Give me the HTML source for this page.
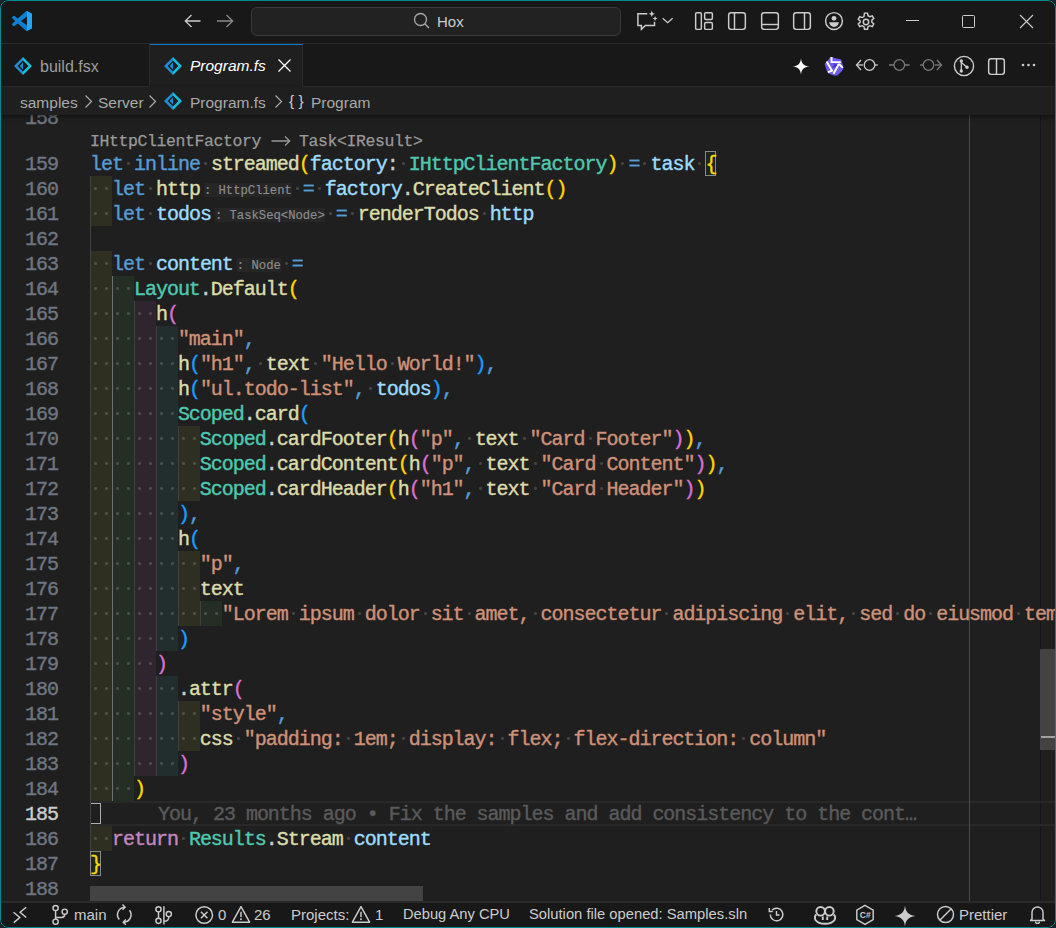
<!DOCTYPE html><html><head><meta charset="utf-8"><style>
*{margin:0;padding:0;box-sizing:border-box}
html,body{width:1056px;height:928px;overflow:hidden;background:#1e232b}
#win{position:absolute;left:0;top:0;width:1056px;height:928px;border-radius:8px;background:#181818;overflow:hidden}
#frame{position:absolute;left:0;top:0;width:1056px;height:928px;border:1px solid #008b93;border-radius:8px;z-index:50}
.abs{position:absolute}
#title{position:absolute;left:0;top:0;width:1056px;height:44px;background:#181818;border-bottom:1px solid #2b2b2b}
#tabs{position:absolute;left:0;top:44px;width:1056px;height:44px;background:#181818}
#crumbs{position:absolute;left:0;top:87px;width:1056px;height:28px;background:#1f1f1f;box-shadow:0 2px 4px rgba(0,0,0,0.45);z-index:5}
#editor{position:absolute;left:0;top:88px;width:1056px;height:813px;background:#1f1f1f;overflow:hidden}
#status{position:absolute;left:0;top:901px;width:1056px;height:27px;background:#181818;border-top:2px solid #2a2a2a}
.ui{font-family:"Liberation Sans",sans-serif;color:#cccccc;white-space:pre}
.ln{position:absolute;left:90px;height:25px;line-height:25px;font-family:"Liberation Mono",monospace;font-size:20px;letter-spacing:-1.0158px;white-space:pre;padding-top:1px;-webkit-text-stroke:0.4px currentColor}
.num{position:absolute;left:0;width:58px;text-align:right;height:25px;line-height:25px;font-family:"Liberation Mono",monospace;font-size:20px;letter-spacing:-1.0158px;color:#6e7681;padding-top:1px;-webkit-text-stroke:0.4px currentColor}
.num.act{color:#cccccc}
.ib{position:absolute;height:25px}
.g{position:absolute;width:1px}
.w{color:transparent;-webkit-text-stroke:0;background:radial-gradient(circle at 50% calc(50% - 1px), rgba(210,210,210,0.2) 1.2px, transparent 1.8px)}
.k{color:#569cd6}.f{color:#dcdcaa}.v{color:#9cdcfe}.t{color:#4ec9b0}.s{color:#ce9178}.p{color:#cccccc}.c{color:#569cd6}.b1{color:#ffd700}.b2{color:#da70d6}.b3{color:#179fff}.r{color:#c586c0}.o{color:#569cd6}
.hint{display:inline-block;margin-left:4px;font-size:12.22px;letter-spacing:-0.007px;line-height:13px;height:14px;vertical-align:1px;background:#262626;color:#8b8b8b;-webkit-text-stroke:0.2px #8b8b8b;padding-top:2px}
.bm{color:#ffd700}
</style></head><body>
<div id="win">
<div id="title"></div>
<div id="tabs"></div>
<svg class="abs" style="left:12px;top:11px" width="20" height="20" viewBox="0 0 100 100" ><path fill="#0a7fd4" d="M96.46 10.78L75.87.87a6.22 6.22 0 0 0-7.1 1.21L29.36 38.04 12.19 25.01a4.16 4.16 0 0 0-5.32.24L1.36 30.25a4.17 4.17 0 0 0 0 6.17L16.25 50 1.36 63.58a4.17 4.17 0 0 0 0 6.17l5.51 5a4.16 4.16 0 0 0 5.32.24l17.17-13.03 39.41 35.96a6.22 6.22 0 0 0 7.1 1.21l20.59-9.91A6.24 6.24 0 0 0 100 83.59V16.41a6.24 6.24 0 0 0-3.54-5.63zM75.02 72.7L45.11 50l29.91-22.7z"/><path fill="#007acc" d="M1.36 30.25a4.17 4.17 0 0 0 0 6.17L16.25 50l-14.89 13.58a4.17 4.17 0 0 0 0 6.17l5.51 5a4.16 4.16 0 0 0 5.32.24L75.02 27.3V2.08a6.22 6.22 0 0 0-6.25.0L12.19 25.01a4.16 4.16 0 0 0-5.32.24z" opacity="0"/><path fill="#25a5f5" d="M70.91 99.32a6.22 6.22 0 0 0 4.96-.19l20.59-9.91A6.24 6.24 0 0 0 100 83.59V16.41a6.24 6.24 0 0 0-3.54-5.63L75.87.87a6.22 6.22 0 0 0-4.96-.19c.78.3 1.5.76 2.11 1.37L75.02 2.1v95.8l-2 .05c-.6.6-1.33 1.07-2.11 1.37z"/></svg>
<svg class="abs" style="left:183px;top:13px" width="19" height="16" viewBox="0 0 19 16" ><path d="M2 8H17.5M8.5 2L2.3 8l6.2 6" fill="none" stroke="#cccccc" stroke-width="1.3"/></svg>
<svg class="abs" style="left:216px;top:13px" width="19" height="16" viewBox="0 0 19 16" ><path d="M1 8H16.5M10.5 2L16.7 8l-6.2 6" fill="none" stroke="#8b8b8b" stroke-width="1.3"/></svg>
<div class="abs" style="left:251px;top:7px;width:370px;height:29px;border:1px solid #3a3a3a;border-radius:6px;background:#222222"></div>
<svg class="abs" style="left:413px;top:12px" width="17" height="17" viewBox="0 0 17 17" ><circle cx="7.5" cy="7.5" r="6" fill="none" stroke="#a8a8a8" stroke-width="1.3"/><path d="M11.8 11.8L16 16" stroke="#a8a8a8" stroke-width="1.4"/></svg>
<div class="ui abs" style="left:437px;top:14px;font-size:15px;line-height:15px;color:#cccccc;">Hox</div>
<svg class="abs" style="left:630px;top:5px" width="50" height="32" viewBox="0 0 50 32" ><path d="M17.3 8.8H7.9V20.4H11.4V24.2L15.4 20.4H24.5V16.8" fill="none" stroke="#cccccc" stroke-width="1.45"/><path d="M21.8 5.6l.9 2.3 2.3.9-2.3.9-.9 2.3-.9-2.3-2.3-.9 2.3-.9z" fill="#cccccc"/><path d="M25.1 10.9l.7 1.9 1.9.7-1.9.7-.7 1.9-.7-1.9-1.9-.7 1.9-.7z" fill="#cccccc"/><path d="M32.7 13.3l4.95 4.4 4.95-4.4" fill="none" stroke="#cccccc" stroke-width="1.3"/></svg>
<svg class="abs" style="left:694px;top:11px" width="20" height="20" viewBox="0 0 20 20" ><rect x="1.65" y="1.65" width="5.7" height="16.7" rx="1.2" fill="none" stroke="#cccccc" stroke-width="1.45"/><rect x="10.65" y="1.65" width="7.7" height="6.9" rx="1.2" fill="none" stroke="#cccccc" stroke-width="1.45"/><rect x="10.65" y="11.45" width="7.7" height="6.9" rx="1.2" fill="none" stroke="#cccccc" stroke-width="1.45"/></svg>
<svg class="abs" style="left:727px;top:11px" width="20" height="20" viewBox="0 0 20 20" ><rect x="1.65" y="1.65" width="16.7" height="16.7" rx="2.5" fill="none" stroke="#cccccc" stroke-width="1.45"/><path d="M7.5 1.7V18.3" fill="none" stroke="#cccccc" stroke-width="1.45"/></svg>
<svg class="abs" style="left:760px;top:11px" width="20" height="20" viewBox="0 0 20 20" ><rect x="1.65" y="1.65" width="16.7" height="16.7" rx="2.5" fill="none" stroke="#cccccc" stroke-width="1.45"/><path d="M1.7 13.5H18.3" fill="none" stroke="#cccccc" stroke-width="1.45"/></svg>
<svg class="abs" style="left:792px;top:11px" width="20" height="20" viewBox="0 0 20 20" ><rect x="1.65" y="1.65" width="16.7" height="16.7" rx="2.5" fill="none" stroke="#cccccc" stroke-width="1.45"/><path d="M12.5 1.7V18.3" fill="none" stroke="#cccccc" stroke-width="1.45"/></svg>
<svg class="abs" style="left:824px;top:11px" width="20" height="20" viewBox="0 0 20 20" ><circle cx="10" cy="10" r="8.4" fill="none" stroke="#cccccc" stroke-width="1.45"/><circle cx="10" cy="7.3" r="2.4" fill="#cccccc"/><path d="M5.2 11.2h9.6a4.8 4.8 0 0 1-9.6 0z" fill="#cccccc"/></svg>
<svg class="abs" style="left:856px;top:12px" width="20" height="20" viewBox="0 0 20 20" ><g transform="translate(10 10) scale(1.08) translate(-10 -10)"><path fill="none" stroke="#cccccc" stroke-width="1.35" d="M8.6 1.8h2.8l.5 2.4 1.6.9 2.3-.8 1.4 2.4-1.8 1.6v1.9l1.8 1.6-1.4 2.4-2.3-.8-1.6.9-.5 2.4H8.6l-.5-2.4-1.6-.9-2.3.8-1.4-2.4 1.8-1.6V9.1L2.8 7.5l1.4-2.4 2.3.8 1.6-.9z"/><circle cx="10" cy="10" r="2.5" fill="none" stroke="#cccccc" stroke-width="1.35"/></g></svg>
<div class="abs" style="left:906px;top:20px;width:13px;height:1px;background:#cccccc"></div>
<div class="abs" style="left:962px;top:15px;width:13px;height:13px;border:1px solid #cccccc;border-radius:1.5px"></div>
<svg class="abs" style="left:1019px;top:14px" width="15" height="15" viewBox="0 0 15 15" ><path d="M1 1L14 14M14 1L1 14" stroke="#cccccc" stroke-width="1.1"/></svg>
<div class="abs" style="left:0;top:86px;width:1056px;height:1px;background:#2b2b2b"></div>
<div class="abs" style="left:149px;top:44px;width:1px;height:42px;background:#2b2b2b"></div>
<svg class="abs" style="left:14px;top:57px" width="18" height="18" viewBox="0 0 18 18" ><polygon fill="#1b8fd6" points="9,0 0,9 9,18 9,14.4 3.6,9 9,3.6"/><polygon fill="#16bfe0" points="9,0 18,9 9,18 9,14.4 14.4,9 9,3.6"/><polygon fill="#1b8fd6" points="9,5.6 5.6,9 9,12.4"/></svg>
<div class="ui abs" style="left:40px;top:59px;font-size:16px;line-height:16px;color:#9d9d9d;">build.fsx</div>
<div class="abs" style="left:150px;top:44px;width:153px;height:43px;background:#1f1f1f;border-top:1px solid #0078d4;border-right:1px solid #2b2b2b"></div>
<svg class="abs" style="left:164px;top:57px" width="18" height="18" viewBox="0 0 18 18" ><polygon fill="#1b8fd6" points="9,0 0,9 9,18 9,14.4 3.6,9 9,3.6"/><polygon fill="#16bfe0" points="9,0 18,9 9,18 9,14.4 14.4,9 9,3.6"/><polygon fill="#1b8fd6" points="9,5.6 5.6,9 9,12.4"/></svg>
<div class="ui abs" style="left:190px;top:58px;font-size:15.5px;line-height:15.5px;color:#ffffff;font-style:italic;">Program.fs</div>
<svg class="abs" style="left:277px;top:58px" width="15" height="15" viewBox="0 0 15 15" ><path d="M1.5 1.5L13.5 13.5M13.5 1.5L1.5 13.5" stroke="#ffffff" stroke-width="1.3"/></svg>
<svg class="abs" style="left:792px;top:58px" width="18" height="17" viewBox="0 0 18 17" ><path d="M9 .5C9.6 5.6 11.6 7.8 17.5 8.5 11.6 9.2 9.6 11.4 9 16.5 8.4 11.4 6.4 9.2.5 8.5 6.4 7.8 8.4 5.6 9 .5z" fill="#ffffff"/></svg>
<svg class="abs" style="left:824px;top:56px" width="20" height="20" viewBox="0 0 20 20" ><path d="M6.5 0.8L12.5 2.6 17.2 3.4 19.6 11.8 17.8 15.2 13.4 19.4 9.6 19.6 3.5 17 0.6 8 3.2 5.2z" fill="#6e5cf0"/><path d="M8 12.5L10.5 7.5 14.5 9.5z" fill="#4b2fd6"/><path d="M7.5 0.9V6.1H16.8M2.6 5.4L8.1 14.7 4 16.1M15 7.8L9.5 17.8M15 7.8L18.8 11.9" fill="none" stroke="#ffffff" stroke-width="1.9"/></svg>
<svg class="abs" style="left:855px;top:56px" width="23" height="18" viewBox="0 0 23 18" ><path d="M6 4L1.5 9 6 14" fill="none" stroke="#cccccc" stroke-width="1.3"/><path d="M2 9h6" stroke="#cccccc" stroke-width="1.3"/><circle cx="14.5" cy="9" r="5.3" fill="none" stroke="#cccccc" stroke-width="1.3"/><path d="M19.8 9h3" stroke="#cccccc" stroke-width="1.3"/></svg>
<svg class="abs" style="left:889px;top:56px" width="21" height="18" viewBox="0 0 21 18" ><path d="M0 9h5M15.5 9h5" stroke="#7a7a7a" stroke-width="1.3"/><circle cx="10.3" cy="9" r="5.3" fill="none" stroke="#7a7a7a" stroke-width="1.3"/></svg>
<svg class="abs" style="left:920px;top:56px" width="23" height="18" viewBox="0 0 23 18" ><path d="M17 4l4.5 5-4.5 5" fill="none" stroke="#7a7a7a" stroke-width="1.3"/><path d="M15 9h6" stroke="#7a7a7a" stroke-width="1.3"/><circle cx="8.5" cy="9" r="5.3" fill="none" stroke="#7a7a7a" stroke-width="1.3"/><path d="M0 9h3" stroke="#7a7a7a" stroke-width="1.3"/></svg>
<svg class="abs" style="left:953px;top:55px" width="22" height="22" viewBox="0 0 22 22" ><circle cx="11" cy="11" r="9.6" fill="none" stroke="#cccccc" stroke-width="1.4"/><circle cx="8.3" cy="6" r="1.7" fill="#cccccc"/><circle cx="8.3" cy="16" r="1.7" fill="#cccccc"/><circle cx="14" cy="12.2" r="1.7" fill="#cccccc"/><path d="M8.3 6v10M8.3 7.5l5.7 4.7" stroke="#cccccc" stroke-width="1.3" fill="none"/></svg>
<svg class="abs" style="left:987px;top:57px" width="19" height="19" viewBox="0 0 19 19" ><rect x="1.65" y="1.65" width="15.7" height="15.7" rx="2.5" fill="none" stroke="#cccccc" stroke-width="1.45"/><path d="M9.5 1.7V17.3" fill="none" stroke="#cccccc" stroke-width="1.45"/></svg>
<svg class="abs" style="left:1021px;top:62px" width="16" height="6" viewBox="0 0 16 6" ><circle cx="2" cy="3" r="1.3" fill="#cccccc"/><circle cx="7.5" cy="3" r="1.3" fill="#cccccc"/><circle cx="13" cy="3" r="1.3" fill="#cccccc"/></svg>
<div id="editor"><div style="position:absolute;left:0;top:-88px;width:1056px;height:928px">
<div class="abs" style="left:969px;top:88px;width:1px;height:813px;background:#4a4a4a;z-index:3"></div>
<div class="abs" style="left:1040px;top:88px;width:1px;height:813px;background:#161616"></div>
<div class="abs" style="left:1040px;top:649px;width:15px;height:101px;background:#434343"></div>
<div class="abs" style="left:1041px;top:736px;width:14px;height:2px;background:#a0a0a0"></div>
<div class="abs" style="left:90px;top:801px;width:966px;height:25px;border-top:2px solid #282828;border-bottom:2px solid #282828"></div>
<div class="abs" style="left:90px;top:803px;width:11px;height:21px;border:1px solid #aeafad"></div>
<div class="ln" style="top:801px;left:158px;color:#5a5a5a">You, 23 months ago • Fix the samples and add consistency to the cont…</div>
<div class="abs" style="left:90px;top:131px;height:21px;line-height:21px;font-family:'Liberation Mono',monospace;font-size:16.5px;letter-spacing:-0.4015px;-webkit-text-stroke:0.25px #999999;color:#999999;white-space:pre">IHttpClientFactory    Task&lt;IResult&gt;</div>
<svg class="abs" style="left:271px;top:135px" width="20" height="12"><path d="M0.5 6H19M14 1.5L18.7 6 14 10.5" fill="none" stroke="#999999" stroke-width="1.3"/></svg>
<div class="abs" style="left:705px;top:151px;width:11px;height:25px;border:1px solid #8a8a8a;background:#1c261c"></div>
<div class="abs" style="left:90px;top:851px;width:11px;height:25px;border:1px solid #8a8a8a;background:#1c261c"></div>
<div class="abs" style="left:90px;top:886px;width:333px;height:15px;background:#434343"></div>
<div class="ib" style="width:22px;left:90px;top:176px;background:rgba(255,255,64,0.07)"></div>
<div class="ln" style="top:176px"><span class="w">·</span><span class="w">·</span></div>
<div class="ib" style="width:22px;left:90px;top:201px;background:rgba(255,255,64,0.07)"></div>
<div class="ln" style="top:201px"><span class="w">·</span><span class="w">·</span></div>
<div class="ib" style="width:22px;left:90px;top:251px;background:rgba(255,255,64,0.07)"></div>
<div class="ln" style="top:251px"><span class="w">·</span><span class="w">·</span></div>
<div class="ib" style="width:22px;left:90px;top:276px;background:rgba(255,255,64,0.07)"></div>
<div class="ib" style="width:22px;left:112px;top:276px;background:rgba(127,255,127,0.07)"></div>
<div class="ln" style="top:276px"><span class="w">·</span><span class="w">·</span><span class="w">·</span><span class="w">·</span></div>
<div class="ib" style="width:22px;left:90px;top:301px;background:rgba(255,255,64,0.07)"></div>
<div class="ib" style="width:22px;left:112px;top:301px;background:rgba(127,255,127,0.07)"></div>
<div class="ib" style="width:22px;left:134px;top:301px;background:rgba(255,127,255,0.07)"></div>
<div class="ln" style="top:301px"><span class="w">·</span><span class="w">·</span><span class="w">·</span><span class="w">·</span><span class="w">·</span><span class="w">·</span></div>
<div class="ib" style="width:22px;left:90px;top:326px;background:rgba(255,255,64,0.07)"></div>
<div class="ib" style="width:22px;left:112px;top:326px;background:rgba(127,255,127,0.07)"></div>
<div class="ib" style="width:22px;left:134px;top:326px;background:rgba(255,127,255,0.07)"></div>
<div class="ib" style="width:22px;left:156px;top:326px;background:rgba(79,236,236,0.07)"></div>
<div class="ln" style="top:326px"><span class="w">·</span><span class="w">·</span><span class="w">·</span><span class="w">·</span><span class="w">·</span><span class="w">·</span><span class="w">·</span><span class="w">·</span></div>
<div class="ib" style="width:22px;left:90px;top:351px;background:rgba(255,255,64,0.07)"></div>
<div class="ib" style="width:22px;left:112px;top:351px;background:rgba(127,255,127,0.07)"></div>
<div class="ib" style="width:22px;left:134px;top:351px;background:rgba(255,127,255,0.07)"></div>
<div class="ib" style="width:22px;left:156px;top:351px;background:rgba(79,236,236,0.07)"></div>
<div class="ln" style="top:351px"><span class="w">·</span><span class="w">·</span><span class="w">·</span><span class="w">·</span><span class="w">·</span><span class="w">·</span><span class="w">·</span><span class="w">·</span></div>
<div class="ib" style="width:22px;left:90px;top:376px;background:rgba(255,255,64,0.07)"></div>
<div class="ib" style="width:22px;left:112px;top:376px;background:rgba(127,255,127,0.07)"></div>
<div class="ib" style="width:22px;left:134px;top:376px;background:rgba(255,127,255,0.07)"></div>
<div class="ib" style="width:22px;left:156px;top:376px;background:rgba(79,236,236,0.07)"></div>
<div class="ln" style="top:376px"><span class="w">·</span><span class="w">·</span><span class="w">·</span><span class="w">·</span><span class="w">·</span><span class="w">·</span><span class="w">·</span><span class="w">·</span></div>
<div class="ib" style="width:22px;left:90px;top:401px;background:rgba(255,255,64,0.07)"></div>
<div class="ib" style="width:22px;left:112px;top:401px;background:rgba(127,255,127,0.07)"></div>
<div class="ib" style="width:22px;left:134px;top:401px;background:rgba(255,127,255,0.07)"></div>
<div class="ib" style="width:22px;left:156px;top:401px;background:rgba(79,236,236,0.07)"></div>
<div class="ln" style="top:401px"><span class="w">·</span><span class="w">·</span><span class="w">·</span><span class="w">·</span><span class="w">·</span><span class="w">·</span><span class="w">·</span><span class="w">·</span></div>
<div class="ib" style="width:22px;left:90px;top:426px;background:rgba(255,255,64,0.07)"></div>
<div class="ib" style="width:22px;left:112px;top:426px;background:rgba(127,255,127,0.07)"></div>
<div class="ib" style="width:22px;left:134px;top:426px;background:rgba(255,127,255,0.07)"></div>
<div class="ib" style="width:22px;left:156px;top:426px;background:rgba(79,236,236,0.07)"></div>
<div class="ib" style="width:22px;left:178px;top:426px;background:rgba(255,255,64,0.07)"></div>
<div class="ln" style="top:426px"><span class="w">·</span><span class="w">·</span><span class="w">·</span><span class="w">·</span><span class="w">·</span><span class="w">·</span><span class="w">·</span><span class="w">·</span><span class="w">·</span><span class="w">·</span></div>
<div class="ib" style="width:22px;left:90px;top:451px;background:rgba(255,255,64,0.07)"></div>
<div class="ib" style="width:22px;left:112px;top:451px;background:rgba(127,255,127,0.07)"></div>
<div class="ib" style="width:22px;left:134px;top:451px;background:rgba(255,127,255,0.07)"></div>
<div class="ib" style="width:22px;left:156px;top:451px;background:rgba(79,236,236,0.07)"></div>
<div class="ib" style="width:22px;left:178px;top:451px;background:rgba(255,255,64,0.07)"></div>
<div class="ln" style="top:451px"><span class="w">·</span><span class="w">·</span><span class="w">·</span><span class="w">·</span><span class="w">·</span><span class="w">·</span><span class="w">·</span><span class="w">·</span><span class="w">·</span><span class="w">·</span></div>
<div class="ib" style="width:22px;left:90px;top:476px;background:rgba(255,255,64,0.07)"></div>
<div class="ib" style="width:22px;left:112px;top:476px;background:rgba(127,255,127,0.07)"></div>
<div class="ib" style="width:22px;left:134px;top:476px;background:rgba(255,127,255,0.07)"></div>
<div class="ib" style="width:22px;left:156px;top:476px;background:rgba(79,236,236,0.07)"></div>
<div class="ib" style="width:22px;left:178px;top:476px;background:rgba(255,255,64,0.07)"></div>
<div class="ln" style="top:476px"><span class="w">·</span><span class="w">·</span><span class="w">·</span><span class="w">·</span><span class="w">·</span><span class="w">·</span><span class="w">·</span><span class="w">·</span><span class="w">·</span><span class="w">·</span></div>
<div class="ib" style="width:22px;left:90px;top:501px;background:rgba(255,255,64,0.07)"></div>
<div class="ib" style="width:22px;left:112px;top:501px;background:rgba(127,255,127,0.07)"></div>
<div class="ib" style="width:22px;left:134px;top:501px;background:rgba(255,127,255,0.07)"></div>
<div class="ib" style="width:22px;left:156px;top:501px;background:rgba(79,236,236,0.07)"></div>
<div class="ln" style="top:501px"><span class="w">·</span><span class="w">·</span><span class="w">·</span><span class="w">·</span><span class="w">·</span><span class="w">·</span><span class="w">·</span><span class="w">·</span></div>
<div class="ib" style="width:22px;left:90px;top:526px;background:rgba(255,255,64,0.07)"></div>
<div class="ib" style="width:22px;left:112px;top:526px;background:rgba(127,255,127,0.07)"></div>
<div class="ib" style="width:22px;left:134px;top:526px;background:rgba(255,127,255,0.07)"></div>
<div class="ib" style="width:22px;left:156px;top:526px;background:rgba(79,236,236,0.07)"></div>
<div class="ln" style="top:526px"><span class="w">·</span><span class="w">·</span><span class="w">·</span><span class="w">·</span><span class="w">·</span><span class="w">·</span><span class="w">·</span><span class="w">·</span></div>
<div class="ib" style="width:22px;left:90px;top:551px;background:rgba(255,255,64,0.07)"></div>
<div class="ib" style="width:22px;left:112px;top:551px;background:rgba(127,255,127,0.07)"></div>
<div class="ib" style="width:22px;left:134px;top:551px;background:rgba(255,127,255,0.07)"></div>
<div class="ib" style="width:22px;left:156px;top:551px;background:rgba(79,236,236,0.07)"></div>
<div class="ib" style="width:22px;left:178px;top:551px;background:rgba(255,255,64,0.07)"></div>
<div class="ln" style="top:551px"><span class="w">·</span><span class="w">·</span><span class="w">·</span><span class="w">·</span><span class="w">·</span><span class="w">·</span><span class="w">·</span><span class="w">·</span><span class="w">·</span><span class="w">·</span></div>
<div class="ib" style="width:22px;left:90px;top:576px;background:rgba(255,255,64,0.07)"></div>
<div class="ib" style="width:22px;left:112px;top:576px;background:rgba(127,255,127,0.07)"></div>
<div class="ib" style="width:22px;left:134px;top:576px;background:rgba(255,127,255,0.07)"></div>
<div class="ib" style="width:22px;left:156px;top:576px;background:rgba(79,236,236,0.07)"></div>
<div class="ib" style="width:22px;left:178px;top:576px;background:rgba(255,255,64,0.07)"></div>
<div class="ln" style="top:576px"><span class="w">·</span><span class="w">·</span><span class="w">·</span><span class="w">·</span><span class="w">·</span><span class="w">·</span><span class="w">·</span><span class="w">·</span><span class="w">·</span><span class="w">·</span></div>
<div class="ib" style="width:22px;left:90px;top:601px;background:rgba(255,255,64,0.07)"></div>
<div class="ib" style="width:22px;left:112px;top:601px;background:rgba(127,255,127,0.07)"></div>
<div class="ib" style="width:22px;left:134px;top:601px;background:rgba(255,127,255,0.07)"></div>
<div class="ib" style="width:22px;left:156px;top:601px;background:rgba(79,236,236,0.07)"></div>
<div class="ib" style="width:22px;left:178px;top:601px;background:rgba(255,255,64,0.07)"></div>
<div class="ib" style="width:22px;left:200px;top:601px;background:rgba(127,255,127,0.07)"></div>
<div class="ln" style="top:601px"><span class="w">·</span><span class="w">·</span><span class="w">·</span><span class="w">·</span><span class="w">·</span><span class="w">·</span><span class="w">·</span><span class="w">·</span><span class="w">·</span><span class="w">·</span><span class="w">·</span><span class="w">·</span></div>
<div class="ib" style="width:22px;left:90px;top:626px;background:rgba(255,255,64,0.07)"></div>
<div class="ib" style="width:22px;left:112px;top:626px;background:rgba(127,255,127,0.07)"></div>
<div class="ib" style="width:22px;left:134px;top:626px;background:rgba(255,127,255,0.07)"></div>
<div class="ib" style="width:22px;left:156px;top:626px;background:rgba(79,236,236,0.07)"></div>
<div class="ln" style="top:626px"><span class="w">·</span><span class="w">·</span><span class="w">·</span><span class="w">·</span><span class="w">·</span><span class="w">·</span><span class="w">·</span><span class="w">·</span></div>
<div class="ib" style="width:22px;left:90px;top:651px;background:rgba(255,255,64,0.07)"></div>
<div class="ib" style="width:22px;left:112px;top:651px;background:rgba(127,255,127,0.07)"></div>
<div class="ib" style="width:22px;left:134px;top:651px;background:rgba(255,127,255,0.07)"></div>
<div class="ln" style="top:651px"><span class="w">·</span><span class="w">·</span><span class="w">·</span><span class="w">·</span><span class="w">·</span><span class="w">·</span></div>
<div class="ib" style="width:22px;left:90px;top:676px;background:rgba(255,255,64,0.07)"></div>
<div class="ib" style="width:22px;left:112px;top:676px;background:rgba(127,255,127,0.07)"></div>
<div class="ib" style="width:22px;left:134px;top:676px;background:rgba(255,127,255,0.07)"></div>
<div class="ib" style="width:22px;left:156px;top:676px;background:rgba(79,236,236,0.07)"></div>
<div class="ln" style="top:676px"><span class="w">·</span><span class="w">·</span><span class="w">·</span><span class="w">·</span><span class="w">·</span><span class="w">·</span><span class="w">·</span><span class="w">·</span></div>
<div class="ib" style="width:22px;left:90px;top:701px;background:rgba(255,255,64,0.07)"></div>
<div class="ib" style="width:22px;left:112px;top:701px;background:rgba(127,255,127,0.07)"></div>
<div class="ib" style="width:22px;left:134px;top:701px;background:rgba(255,127,255,0.07)"></div>
<div class="ib" style="width:22px;left:156px;top:701px;background:rgba(79,236,236,0.07)"></div>
<div class="ib" style="width:22px;left:178px;top:701px;background:rgba(255,255,64,0.07)"></div>
<div class="ln" style="top:701px"><span class="w">·</span><span class="w">·</span><span class="w">·</span><span class="w">·</span><span class="w">·</span><span class="w">·</span><span class="w">·</span><span class="w">·</span><span class="w">·</span><span class="w">·</span></div>
<div class="ib" style="width:22px;left:90px;top:726px;background:rgba(255,255,64,0.07)"></div>
<div class="ib" style="width:22px;left:112px;top:726px;background:rgba(127,255,127,0.07)"></div>
<div class="ib" style="width:22px;left:134px;top:726px;background:rgba(255,127,255,0.07)"></div>
<div class="ib" style="width:22px;left:156px;top:726px;background:rgba(79,236,236,0.07)"></div>
<div class="ib" style="width:22px;left:178px;top:726px;background:rgba(255,255,64,0.07)"></div>
<div class="ln" style="top:726px"><span class="w">·</span><span class="w">·</span><span class="w">·</span><span class="w">·</span><span class="w">·</span><span class="w">·</span><span class="w">·</span><span class="w">·</span><span class="w">·</span><span class="w">·</span></div>
<div class="ib" style="width:22px;left:90px;top:751px;background:rgba(255,255,64,0.07)"></div>
<div class="ib" style="width:22px;left:112px;top:751px;background:rgba(127,255,127,0.07)"></div>
<div class="ib" style="width:22px;left:134px;top:751px;background:rgba(255,127,255,0.07)"></div>
<div class="ib" style="width:22px;left:156px;top:751px;background:rgba(79,236,236,0.07)"></div>
<div class="ln" style="top:751px"><span class="w">·</span><span class="w">·</span><span class="w">·</span><span class="w">·</span><span class="w">·</span><span class="w">·</span><span class="w">·</span><span class="w">·</span></div>
<div class="ib" style="width:22px;left:90px;top:776px;background:rgba(255,255,64,0.07)"></div>
<div class="ib" style="width:22px;left:112px;top:776px;background:rgba(127,255,127,0.07)"></div>
<div class="ln" style="top:776px"><span class="w">·</span><span class="w">·</span><span class="w">·</span><span class="w">·</span></div>
<div class="ib" style="width:22px;left:90px;top:826px;background:rgba(255,255,64,0.07)"></div>
<div class="ln" style="top:826px"><span class="w">·</span><span class="w">·</span></div>
<div class="g" style="left:90px;top:176px;height:675px;background:#404040"></div>
<div class="g" style="left:112px;top:276px;height:525px;background:#707070"></div>
<div class="g" style="left:134px;top:301px;height:475px;background:#404040"></div>
<div class="g" style="left:156px;top:326px;height:325px;background:#404040"></div>
<div class="g" style="left:156px;top:676px;height:100px;background:#404040"></div>
<div class="g" style="left:178px;top:426px;height:75px;background:#404040"></div>
<div class="g" style="left:178px;top:551px;height:75px;background:#404040"></div>
<div class="g" style="left:178px;top:701px;height:50px;background:#404040"></div>
<div class="g" style="left:200px;top:601px;height:25px;background:#404040"></div>
<div class="ln" style="top:105px;left:90.0px"></div>
<div class="num" style="top:105px">158</div>
<div class="ln" style="top:151px;left:90.0px"><span class="k">let</span><span class="w">·</span><span class="k">inline</span><span class="w">·</span><span class="f">streamed</span><span class="b1">(</span><span class="v">factory</span><span class="p">:</span><span class="w">·</span><span class="t">IHttpClientFactory</span><span class="b1">)</span><span class="w">·</span><span class="o">=</span><span class="w">·</span><span class="v">task</span><span class="w">·</span><span class="bm">{</span></div>
<div class="num" style="top:151px">159</div>
<div class="ln" style="top:176px;left:111.97200000000001px"><span class="k">let</span><span class="w">·</span><span class="f">http</span><span class="hint">: HttpClient</span><span class="w">·</span><span class="o">=</span><span class="w">·</span><span class="v">factory</span><span class="p">.</span><span class="f">CreateClient</span><span class="b1">()</span></div>
<div class="num" style="top:176px">160</div>
<div class="ln" style="top:201px;left:111.97200000000001px"><span class="k">let</span><span class="w">·</span><span class="v">todos</span><span class="hint">: TaskSeq&lt;Node&gt;</span><span class="w">·</span><span class="o">=</span><span class="w">·</span><span class="f">renderTodos</span><span class="w">·</span><span class="v">http</span></div>
<div class="num" style="top:201px">161</div>
<div class="ln" style="top:226px;left:90.0px"></div>
<div class="num" style="top:226px">162</div>
<div class="ln" style="top:251px;left:111.97200000000001px"><span class="k">let</span><span class="w">·</span><span class="v">content</span><span class="hint">: Node</span><span class="w">·</span><span class="o">=</span></div>
<div class="num" style="top:251px">163</div>
<div class="ln" style="top:276px;left:133.94400000000002px"><span class="t">Layout</span><span class="p">.</span><span class="f">Default</span><span class="b1">(</span></div>
<div class="num" style="top:276px">164</div>
<div class="ln" style="top:301px;left:155.916px"><span class="f">h</span><span class="b2">(</span></div>
<div class="num" style="top:301px">165</div>
<div class="ln" style="top:326px;left:177.888px"><span class="s">&quot;main&quot;</span><span class="c">,</span></div>
<div class="num" style="top:326px">166</div>
<div class="ln" style="top:351px;left:177.888px"><span class="f">h</span><span class="b3">(</span><span class="s">&quot;h1&quot;</span><span class="c">,</span><span class="w">·</span><span class="f">text</span><span class="w">·</span><span class="s">&quot;Hello</span><span class="w">·</span><span class="s">World!&quot;</span><span class="b3">)</span><span class="c">,</span></div>
<div class="num" style="top:351px">167</div>
<div class="ln" style="top:376px;left:177.888px"><span class="f">h</span><span class="b3">(</span><span class="s">&quot;ul.todo-list&quot;</span><span class="c">,</span><span class="w">·</span><span class="v">todos</span><span class="b3">)</span><span class="c">,</span></div>
<div class="num" style="top:376px">168</div>
<div class="ln" style="top:401px;left:177.888px"><span class="t">Scoped</span><span class="p">.</span><span class="f">card</span><span class="b3">(</span></div>
<div class="num" style="top:401px">169</div>
<div class="ln" style="top:426px;left:199.86px"><span class="t">Scoped</span><span class="p">.</span><span class="f">cardFooter</span><span class="b1">(</span><span class="f">h</span><span class="b2">(</span><span class="s">&quot;p&quot;</span><span class="c">,</span><span class="w">·</span><span class="f">text</span><span class="w">·</span><span class="s">&quot;Card</span><span class="w">·</span><span class="s">Footer&quot;</span><span class="b2">)</span><span class="b1">)</span><span class="c">,</span></div>
<div class="num" style="top:426px">170</div>
<div class="ln" style="top:451px;left:199.86px"><span class="t">Scoped</span><span class="p">.</span><span class="f">cardContent</span><span class="b1">(</span><span class="f">h</span><span class="b2">(</span><span class="s">&quot;p&quot;</span><span class="c">,</span><span class="w">·</span><span class="f">text</span><span class="w">·</span><span class="s">&quot;Card</span><span class="w">·</span><span class="s">Content&quot;</span><span class="b2">)</span><span class="b1">)</span><span class="c">,</span></div>
<div class="num" style="top:451px">171</div>
<div class="ln" style="top:476px;left:199.86px"><span class="t">Scoped</span><span class="p">.</span><span class="f">cardHeader</span><span class="b1">(</span><span class="f">h</span><span class="b2">(</span><span class="s">&quot;h1&quot;</span><span class="c">,</span><span class="w">·</span><span class="f">text</span><span class="w">·</span><span class="s">&quot;Card</span><span class="w">·</span><span class="s">Header&quot;</span><span class="b2">)</span><span class="b1">)</span></div>
<div class="num" style="top:476px">172</div>
<div class="ln" style="top:501px;left:177.888px"><span class="b3">)</span><span class="c">,</span></div>
<div class="num" style="top:501px">173</div>
<div class="ln" style="top:526px;left:177.888px"><span class="f">h</span><span class="b3">(</span></div>
<div class="num" style="top:526px">174</div>
<div class="ln" style="top:551px;left:199.86px"><span class="s">&quot;p&quot;</span><span class="c">,</span></div>
<div class="num" style="top:551px">175</div>
<div class="ln" style="top:576px;left:199.86px"><span class="f">text</span></div>
<div class="num" style="top:576px">176</div>
<div class="ln" style="top:601px;left:221.832px"><span class="s">&quot;Lorem</span><span class="w">·</span><span class="s">ipsum</span><span class="w">·</span><span class="s">dolor</span><span class="w">·</span><span class="s">sit</span><span class="w">·</span><span class="s">amet,</span><span class="w">·</span><span class="s">consectetur</span><span class="w">·</span><span class="s">adipiscing</span><span class="w">·</span><span class="s">elit,</span><span class="w">·</span><span class="s">sed</span><span class="w">·</span><span class="s">do</span><span class="w">·</span><span class="s">eiusmod</span><span class="w">·</span><span class="s">tempor</span><span class="w">·</span><span class="s">incididunt</span></div>
<div class="num" style="top:601px">177</div>
<div class="ln" style="top:626px;left:177.888px"><span class="b3">)</span></div>
<div class="num" style="top:626px">178</div>
<div class="ln" style="top:651px;left:155.916px"><span class="b2">)</span></div>
<div class="num" style="top:651px">179</div>
<div class="ln" style="top:676px;left:177.888px"><span class="p">.</span><span class="f">attr</span><span class="b2">(</span></div>
<div class="num" style="top:676px">180</div>
<div class="ln" style="top:701px;left:199.86px"><span class="s">&quot;style&quot;</span><span class="c">,</span></div>
<div class="num" style="top:701px">181</div>
<div class="ln" style="top:726px;left:199.86px"><span class="f">css</span><span class="w">·</span><span class="s">&quot;padding:</span><span class="w">·</span><span class="s">1em;</span><span class="w">·</span><span class="s">display:</span><span class="w">·</span><span class="s">flex;</span><span class="w">·</span><span class="s">flex-direction:</span><span class="w">·</span><span class="s">column&quot;</span></div>
<div class="num" style="top:726px">182</div>
<div class="ln" style="top:751px;left:177.888px"><span class="b2">)</span></div>
<div class="num" style="top:751px">183</div>
<div class="ln" style="top:776px;left:133.94400000000002px"><span class="b1">)</span></div>
<div class="num" style="top:776px">184</div>
<div class="ln" style="top:801px;left:90.0px"></div>
<div class="num act" style="top:801px">185</div>
<div class="ln" style="top:826px;left:111.97200000000001px"><span class="r">return</span><span class="w">·</span><span class="t">Results</span><span class="p">.</span><span class="f">Stream</span><span class="w">·</span><span class="v">content</span></div>
<div class="num" style="top:826px">186</div>
<div class="ln" style="top:851px;left:90.0px"><span class="bm">}</span></div>
<div class="num" style="top:851px">187</div>
<div class="ln" style="top:876px;left:90.0px"></div>
<div class="num" style="top:876px">188</div>
</div></div>
<div id="crumbs"></div>
<div style="position:absolute;left:0;top:0;z-index:6"><div class="ui abs" style="left:20px;top:95px;font-size:15.5px;line-height:15.5px;color:#a9a9a9;">samples</div>
<svg class="abs" style="left:84px;top:94px" width="9" height="15" viewBox="0 0 9 15" ><path d="M1.5 1.5L7.5 7.5 1.5 13.5" fill="none" stroke="#a9a9a9" stroke-width="1.2"/></svg>
<div class="ui abs" style="left:98px;top:95px;font-size:15.5px;line-height:15.5px;color:#a9a9a9;">Server</div>
<svg class="abs" style="left:148px;top:94px" width="9" height="15" viewBox="0 0 9 15" ><path d="M1.5 1.5L7.5 7.5 1.5 13.5" fill="none" stroke="#a9a9a9" stroke-width="1.2"/></svg>
<svg class="abs" style="left:164px;top:92px" width="18" height="18" viewBox="0 0 18 18" ><polygon fill="#1b8fd6" points="9,0 0,9 9,18 9,14.4 3.6,9 9,3.6"/><polygon fill="#16bfe0" points="9,0 18,9 9,18 9,14.4 14.4,9 9,3.6"/><polygon fill="#1b8fd6" points="9,5.6 5.6,9 9,12.4"/></svg>
<div class="ui abs" style="left:190px;top:95px;font-size:15.5px;line-height:15.5px;color:#a9a9a9;">Program.fs</div>
<svg class="abs" style="left:274px;top:94px" width="9" height="15" viewBox="0 0 9 15" ><path d="M1.5 1.5L7.5 7.5 1.5 13.5" fill="none" stroke="#a9a9a9" stroke-width="1.2"/></svg>
<div class="ui abs" style="left:289px;top:93px;font-size:15.5px;line-height:15.5px;color:#cccccc;">{ }</div>
<div class="ui abs" style="left:311px;top:95px;font-size:15.5px;line-height:15.5px;color:#a9a9a9;">Program</div></div>
<div id="status"></div>
<div style="position:absolute;left:0;top:0;z-index:6"><svg class="abs" style="left:0px;top:900px" width="40" height="28" viewBox="0 0 40 28" ><path d="M13.5 12.3L19.8 17.5 13.8 22.6M26.2 7.2L20.1 12.3 26.2 17.5" fill="none" stroke="#cccccc" stroke-width="1.45"/></svg>
<svg class="abs" style="left:40px;top:900px" width="40" height="28" viewBox="0 0 40 28" ><circle cx="15.6" cy="8" r="2.6" fill="none" stroke="#cccccc" stroke-width="1.45"/><circle cx="15.6" cy="21.7" r="2.6" fill="none" stroke="#cccccc" stroke-width="1.45"/><circle cx="24.7" cy="11.7" r="2.6" fill="none" stroke="#cccccc" stroke-width="1.45"/><path d="M15.6 10.6V19.1M24.7 14.3c0 2.5-1 3.2-3.2 3.2H15.6" fill="none" stroke="#cccccc" stroke-width="1.45"/></svg>
<div class="ui abs" style="left:74px;top:907px;font-size:15px;line-height:15px;color:#cccccc;">main</div>
<svg class="abs" style="left:110px;top:900px" width="30" height="28" viewBox="0 0 30 28" ><path d="M9.3 19.5A7.4 7.4 0 0 1 14.5 7.3M19.5 10.3A7.4 7.4 0 0 1 14 22.2" fill="none" stroke="#cccccc" stroke-width="1.45"/><path d="M12.5 4.6l2.6 2.6-2.6 2.6M15.8 19.6l-2.6 2.6 2.6 2.6" fill="none" stroke="#cccccc" stroke-width="1.45"/></svg>
<svg class="abs" style="left:150px;top:900px" width="26" height="28" viewBox="0 0 26 28" ><path d="M13.9 6.2V24.4M8.5 11.9V18.2M18.8 16.7c0 3.2-1.5 4.7-4.9 4.7" fill="none" stroke="#cccccc" stroke-width="1.45"/><circle cx="8.5" cy="9.3" r="2.6" fill="none" stroke="#cccccc" stroke-width="1.45"/><circle cx="8.5" cy="20.8" r="2.6" fill="none" stroke="#cccccc" stroke-width="1.45"/><circle cx="18.8" cy="14.1" r="2.6" fill="none" stroke="#cccccc" stroke-width="1.45"/></svg>
<svg class="abs" style="left:194px;top:905px" width="21" height="20" viewBox="0 0 21 20" ><circle cx="10.2" cy="10" r="8.3" fill="none" stroke="#cccccc" stroke-width="1.45"/><path d="M6.9 6.7l6.6 6.6M13.5 6.7l-6.6 6.6" fill="none" stroke="#cccccc" stroke-width="1.45"/></svg>
<div class="ui abs" style="left:218px;top:907px;font-size:15px;line-height:15px;color:#cccccc;">0</div>
<svg class="abs" style="left:231px;top:905px" width="20" height="19" viewBox="0 0 20 19" ><path d="M10 1.6L18.6 17.2H1.4z" fill="none" stroke="#cccccc" stroke-width="1.45" stroke-linejoin="round"/><path d="M10 6.8v5.4" fill="none" stroke="#cccccc" stroke-width="1.45"/><circle cx="10" cy="14.3" r="0.95" fill="#cccccc"/></svg>
<div class="ui abs" style="left:254px;top:907px;font-size:15px;line-height:15px;color:#cccccc;">26</div>
<div class="ui abs" style="left:291px;top:907px;font-size:15px;line-height:15px;color:#cccccc;">Projects:</div>
<svg class="abs" style="left:351px;top:905px" width="20" height="19" viewBox="0 0 20 19" ><path d="M10 1.6L18.6 17.2H1.4z" fill="none" stroke="#cccccc" stroke-width="1.45" stroke-linejoin="round"/><path d="M10 6.8v5.4" fill="none" stroke="#cccccc" stroke-width="1.45"/><circle cx="10" cy="14.3" r="0.95" fill="#cccccc"/></svg>
<div class="ui abs" style="left:375px;top:907px;font-size:15px;line-height:15px;color:#cccccc;">1</div>
<div class="ui abs" style="left:403px;top:907px;font-size:14.7px;line-height:14.7px;color:#cccccc;">Debug Any CPU</div>
<div class="ui abs" style="left:529px;top:907px;font-size:14.75px;line-height:14.75px;color:#cccccc;">Solution file opened: Samples.sln</div>
<svg class="abs" style="left:767px;top:905px" width="19" height="19" viewBox="0 0 19 19" ><path d="M3.3 9.5a6.3 6.3 0 1 0 1.8-4.4" fill="none" stroke="#cccccc" stroke-width="1.45"/><path d="M2.3 3v3.5h3.5" fill="none" stroke="#cccccc" stroke-width="1.45"/><path d="M9.5 6v4h3" fill="none" stroke="#cccccc" stroke-width="1.45"/></svg>
<svg class="abs" style="left:814px;top:905px" width="22" height="20" viewBox="0 0 22 20" ><circle cx="6.6" cy="6.3" r="4.3" fill="none" stroke="#cccccc" stroke-width="1.9"/><circle cx="15.4" cy="6.3" r="4.3" fill="none" stroke="#cccccc" stroke-width="1.9"/><path d="M2.3 9.5C.6 11 .8 13.5 1.5 15c1.8 2.6 5.5 3.8 9.5 3.8s7.7-1.2 9.5-3.8c.7-1.5.9-4-.8-5.5" fill="none" stroke="#cccccc" stroke-width="1.9"/><path d="M8.8 11.5v3.5M13.2 11.5v3.5" stroke="#cccccc" stroke-width="1.9"/></svg>
<svg class="abs" style="left:855px;top:904px" width="20" height="22" viewBox="0 0 20 22" ><path d="M10 1.3l8.2 4.75v9.5L10 20.3l-8.2-4.75v-9.5z" fill="none" stroke="#cccccc" stroke-width="1.45"/><text x="10.2" y="14.3" font-family="Liberation Sans" font-weight="bold" font-size="8.5" fill="#cccccc" text-anchor="middle">C#</text></svg>
<svg class="abs" style="left:894px;top:905px" width="22" height="22" viewBox="0 0 22 22" ><path d="M11 .5C11.7 7 14 9.5 21.3 11 14 12.5 11.7 15 11 21.5 10.3 15 8 12.5.7 11 8 9.5 10.3 7 11 .5z" fill="#cccccc"/></svg>
<svg class="abs" style="left:936px;top:905px" width="19" height="19" viewBox="0 0 19 19" ><circle cx="9.5" cy="9.5" r="8" fill="none" stroke="#cccccc" stroke-width="1.45"/><path d="M4 15L15 4" fill="none" stroke="#cccccc" stroke-width="1.45"/></svg>
<div class="ui abs" style="left:959px;top:907px;font-size:15px;line-height:15px;color:#cccccc;">Prettier</div>
<svg class="abs" style="left:1029px;top:905px" width="17" height="19" viewBox="0 0 17 19" ><path d="M3 14V7.5a5.5 5.5 0 0 1 11 0V14l1.5 1.5h-14z" fill="none" stroke="#cccccc" stroke-width="1.45" stroke-linejoin="round"/><path d="M6.5 16.5a2 2 0 0 0 4 0" fill="none" stroke="#cccccc" stroke-width="1.45"/></svg></div>
<div id="frame"></div>
</div>
</body></html>
